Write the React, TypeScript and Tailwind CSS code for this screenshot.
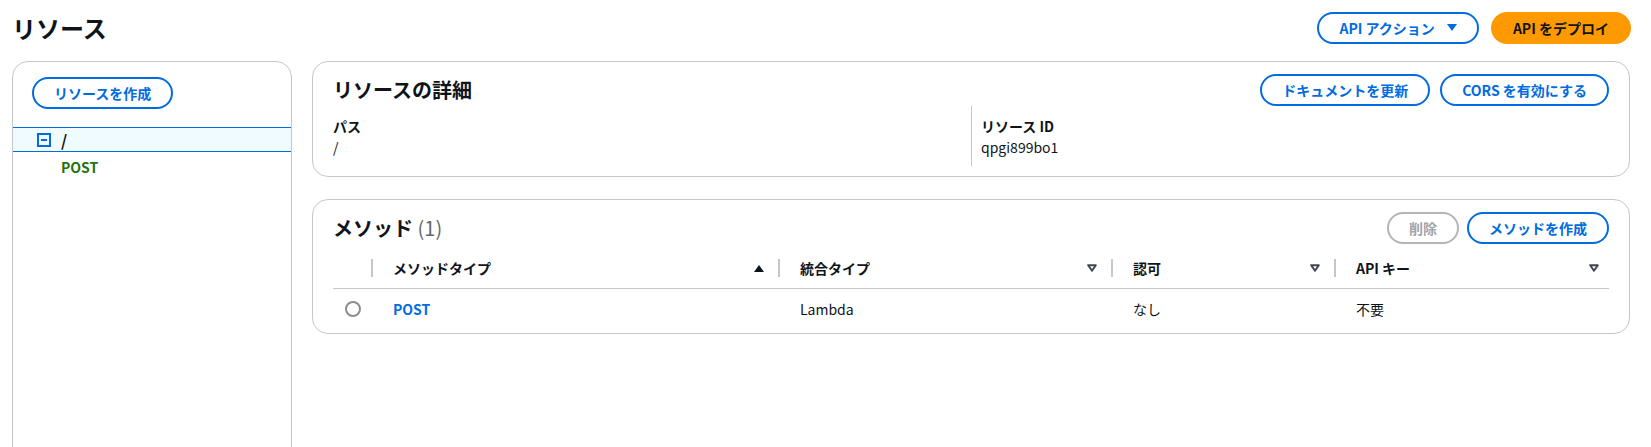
import type { ReactNode } from 'react'

function PillButton({
  children,
  variant = 'normal',
}: {
  children: ReactNode
  variant?: 'normal' | 'primary' | 'disabled'
}) {
  const styles = {
    normal: 'border-[#006ce0] text-[#006ce0] bg-white',
    primary: 'border-[#ff9900] bg-[#ff9900] text-[#0f141a]',
    disabled: 'border-[#b4b4bb] text-[#a3a3ab] bg-white',
  }[variant]
  return (
    <button
      className={`h-[32px] px-[20px] rounded-full border-2 text-[14px] font-bold leading-none flex items-center gap-[12px] whitespace-nowrap ${styles}`}
    >
      {children}
    </button>
  )
}

function CaretDown() {
  return (
    <svg width="10" height="8" viewBox="0 0 10 8">
      <path d="M0 0 H10 L5 7 Z" fill="#006ce0" />
    </svg>
  )
}

function SortUp() {
  return (
    <svg width="10" height="7" viewBox="0 0 10 7">
      <path d="M5 0 L10 7 H0 Z" fill="#0f141a" />
    </svg>
  )
}

function SortNone() {
  return (
    <svg width="10" height="8" viewBox="0 0 10 8">
      <path d="M1.2 1.2 H8.8 L5 6.8 Z" fill="none" stroke="#424650" strokeWidth="2" strokeLinejoin="round" />
    </svg>
  )
}

function MinusSquare() {
  return (
    <svg width="14" height="14" viewBox="0 0 14 14">
      <rect x="1" y="1" width="12" height="12" fill="none" stroke="#006ce0" strokeWidth="2" />
      <path d="M4 7 H10" stroke="#006ce0" strokeWidth="2" />
    </svg>
  )
}

function HeaderCell({ label, sort, last }: { label: string; sort: 'asc' | 'none'; last?: boolean }) {
  return (
    <div className="flex items-center h-[40px]">
      <span className="w-[2px] h-[18px] bg-[#c6c6cd]" />
      <span className="ml-[20px] text-[14px] font-bold">{label}</span>
      <span className={`ml-auto ${last ? 'mr-[10px]' : 'mr-[14px]'} flex items-center`}>
        {sort === 'asc' ? <SortUp /> : <SortNone />}
      </span>
    </div>
  )
}

export default function App() {
  return (
    <div className="w-[1651px] h-[447px] overflow-hidden bg-white text-[#0f141a] font-['Noto_Sans_CJK_JP',sans-serif] pl-[12px] pr-[21px] pt-[12px]">
      {/* Page header */}
      <div className="flex items-center justify-between h-[32px]">
        <h1 className="text-[24px] font-bold leading-none">リソース</h1>
        <div className="flex items-center gap-[12px] mr-[-1px]">
          <PillButton>
            API アクション
            <CaretDown />
          </PillButton>
          <PillButton variant="primary">API をデプロイ</PillButton>
        </div>
      </div>

      <div className="flex gap-[20px] mt-[17px]">
        {/* Resource tree */}
        <div className="w-[280px] h-[420px] shrink-0 rounded-[16px] border border-[#c6c6cd] pt-[15px]">
          <div className="pl-[19px]">
            <PillButton>リソースを作成</PillButton>
          </div>
          <div className="mt-[18px] h-[25px] border-y border-[#006ce0] bg-[#f0fbff] flex items-center pl-[24px] gap-[10px]">
            <MinusSquare />
            <span className="text-[16px] font-bold leading-none">/</span>
          </div>
          <div className="h-[30px] flex items-center pl-[48px] text-[14px] font-bold text-[#1f730c]">
            POST
          </div>
        </div>

        <div className="flex-1 flex flex-col gap-[22px]">
          {/* Resource details */}
          <div className="rounded-[16px] border border-[#c6c6cd] px-[20px] pt-[12px] pb-[10px]">
            <div className="flex items-center justify-between h-[32px]">
              <h2 className="text-[20px] font-bold leading-none">リソースの詳細</h2>
              <div className="flex items-center gap-[10px]">
                <PillButton>ドキュメントを更新</PillButton>
                <PillButton>CORS を有効にする</PillButton>
              </div>
            </div>
            <div className="grid grid-cols-2 text-[14px] leading-[20px]">
              <div className="pt-[10px] pb-[9px]">
                <div className="font-bold">パス</div>
                <div className="mt-[1px]">/</div>
              </div>
              <div className="pt-[10px] pb-[9px] border-l border-[#c6c6cd] pl-[9px]">
                <div className="font-bold">リソース ID</div>
                <div className="mt-[1px]">qpgi899bo1</div>
              </div>
            </div>
          </div>

          {/* Methods */}
          <div className="rounded-[16px] border border-[#c6c6cd] px-[20px] pt-[12px] pb-[4px]">
            <div className="flex items-center justify-between h-[32px]">
              <h2 className="text-[20px] font-bold leading-none">
                メソッド <span className="font-normal text-[#656871]">(1)</span>
              </h2>
              <div className="flex items-center gap-[8px]">
                <PillButton variant="disabled">削除</PillButton>
                <PillButton>メソッドを作成</PillButton>
              </div>
            </div>
            <div className="mt-[4px]">
              <div className="grid grid-cols-[38px_407px_333px_223px_1fr] border-b border-[#c6c6cd]">
                <div />
                <HeaderCell label="メソッドタイプ" sort="asc" />
                <HeaderCell label="統合タイプ" sort="none" />
                <HeaderCell label="認可" sort="none" />
                <HeaderCell label="API キー" sort="none" last />
              </div>
              <div className="grid grid-cols-[38px_407px_333px_223px_1fr] h-[40px] items-center text-[14px]">
                <div className="pl-[12px] flex items-center">
                  <span className="w-[16px] h-[16px] rounded-full border-2 border-[#8c8c94]" />
                </div>
                <div className="pl-[22px] font-bold text-[#006ce0]">POST</div>
                <div className="pl-[22px]">Lambda</div>
                <div className="pl-[22px]">なし</div>
                <div className="pl-[22px]">不要</div>
              </div>
            </div>
          </div>
        </div>
      </div>
    </div>
  )
}
